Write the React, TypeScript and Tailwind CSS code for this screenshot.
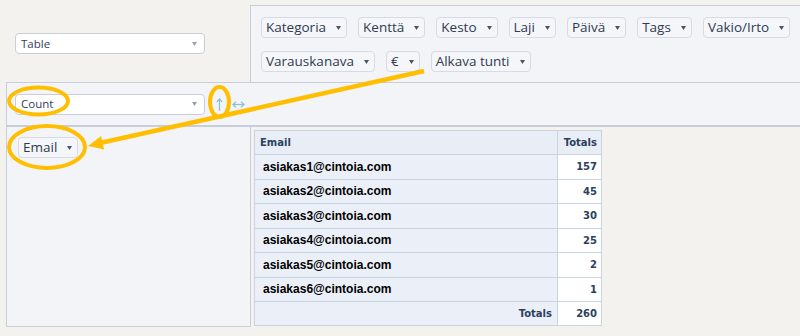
import React from 'react';

const topRow = ['Kategoria', 'Kenttä', 'Kesto', 'Laji', 'Päivä', 'Tags', 'Vakio/Irto'];
const secondRow = ['Varauskanava', '€', 'Alkava tunti'];

const rows = [
  { email: 'asiakas1@cintoia.com', count: 157 },
  { email: 'asiakas2@cintoia.com', count: 45 },
  { email: 'asiakas3@cintoia.com', count: 30 },
  { email: 'asiakas4@cintoia.com', count: 25 },
  { email: 'asiakas5@cintoia.com', count: 2 },
  { email: 'asiakas6@cintoia.com', count: 1 },
];

function Triangle({ color = '#4a5466' }: { color?: string }) {
  return (
    <svg width="5" height="4" viewBox="0 0 5 4" className="shrink-0">
      <path d="M0 0h5L2.5 4z" fill={color} />
    </svg>
  );
}

function Pill({ label }: { label: string }) {
  return (
    <span className="flex h-[21px] items-center gap-[10px] whitespace-nowrap rounded-[4px] border border-[#d6dbe5] bg-[#f5f6fa] pl-[4px] pr-[5px] text-[13.5px] leading-none text-[#2f3b50]">
      {label}
      <Triangle />
    </span>
  );
}

function Select({ label }: { label: string }) {
  return (
    <div className="flex h-[21px] w-[190px] items-center justify-between rounded-[4px] border border-[#c8cdd8] bg-white pl-[5px] pr-[7px] text-[11.5px] leading-none text-[#34405a]">
      <span>{label}</span>
      <Triangle color="#9aa1ad" />
    </div>
  );
}

// sort order buttons: ↑ (rows) and ↔ (cols)
function SortArrows() {
  return (
    <div className="ml-[11px] flex items-center gap-[9px]">
      <svg width="7" height="13" viewBox="0 0 7 13">
        <g fill="none" stroke="#8cc0d4" strokeWidth="1.2">
          <path d="M3.5 1v12" />
          <path d="M0.8 4L3.5 1L6.2 4" />
        </g>
      </svg>
      <svg width="13" height="7" viewBox="0 0 13 7">
        <g fill="none" stroke="#8cc0d4" strokeWidth="1.2">
          <path d="M1 3.5h11" />
          <path d="M4 0.8L1 3.5L4 6.2" />
          <path d="M9 0.8L12 3.5L9 6.2" />
        </g>
      </svg>
    </div>
  );
}

// yellow annotations drawn over the pivot ui
function Annotations() {
  return (
    <svg width="800" height="336" className="pointer-events-none absolute left-0 top-0">
      <g fill="none" stroke="#ffbf00" strokeWidth="4">
        <ellipse cx="38.5" cy="101" rx="29.5" ry="13.5" />
        <ellipse cx="219.5" cy="102" rx="9.5" ry="15" />
        <ellipse cx="47" cy="147" rx="38" ry="21" />
        <line x1="424" y1="71" x2="100" y2="143" strokeWidth="4.5" />
      </g>
      <path d="M88 146L101.1 135.9L104.1 149.5z" fill="#ffbf00" />
    </svg>
  );
}

export default function App() {
  return (
    <div className="relative h-[336px] w-[800px] overflow-hidden bg-[#f3f2ee] pl-[6px] pt-[5px] font-['Open_Sans',sans-serif]">
      {/* renderer + unused attributes */}
      <div className="flex h-[77px]">
        <div className="flex w-[244px] items-center pl-[9px]">
          <Select label="Table" />
        </div>
        <div className="flex flex-1 flex-col gap-[13px] border-l border-t border-[#c8cdd9] bg-[#f2f4f8] pl-[10px] pt-[11px]">
          <div className="flex gap-[11px]">
            {topRow.map((a) => (
              <Pill key={a} label={a} />
            ))}
          </div>
          <div className="flex gap-[11px]">
            {secondRow.map((a) => (
              <Pill key={a} label={a} />
            ))}
          </div>
        </div>
      </div>

      {/* aggregator row */}
      <div className="flex h-[45px] items-center border-b-2 border-l border-t border-[#c8cdd9] bg-[#f2f4f8] pl-[8px]">
        <Select label="Count" />
        <SortArrows />
      </div>

      <div className="flex">
        <div className="h-[200px] w-[245px] border-b border-l border-r border-[#c8cdd9] bg-[#f2f4f8] pl-[11px] pt-[10px]">
          <div className="flex">
            <Pill label="Email" />
          </div>
        </div>

        <div className="ml-[3px] mt-[3px]">
          <table className="w-[348px] border-collapse border border-[#c8d4e3] font-['DejaVu_Sans',sans-serif] text-[10px] font-bold text-[#2a3f5f]">
            <thead>
              <tr className="h-[24px]">
                <th className="border border-[#c8d4e3] bg-[#e9eef6] px-[5px] text-left">Email</th>
                <th className="w-[44px] border border-[#c8d4e3] bg-[#e9eef6] px-[4px] text-right">Totals</th>
              </tr>
            </thead>
            <tbody>
              {rows.map((r) => (
                <tr key={r.email} className="h-[24.5px]">
                  <th className="border border-[#c8d4e3] bg-[#ebf0f8] px-[8px] text-left font-['Liberation_Sans',sans-serif] text-[12px] text-black">
                    {r.email}
                  </th>
                  <td className="border border-[#c8d4e3] bg-white px-[4px] text-right">{r.count}</td>
                </tr>
              ))}
              <tr className="h-[24px]">
                <th className="border border-[#c8d4e3] bg-[#ebf0f8] px-[5px] text-right">Totals</th>
                <td className="border border-[#c8d4e3] bg-white px-[4px] text-right">260</td>
              </tr>
            </tbody>
          </table>
        </div>
      </div>

      <Annotations />
    </div>
  );
}
